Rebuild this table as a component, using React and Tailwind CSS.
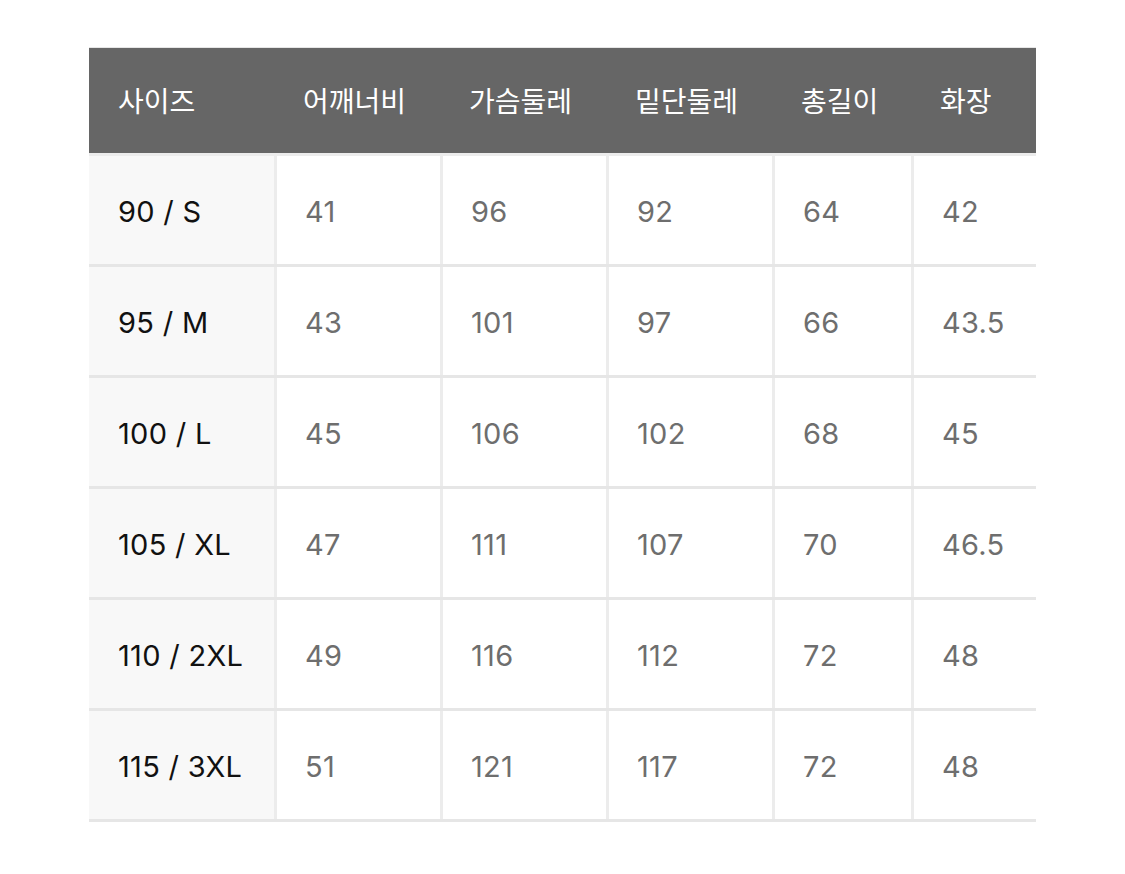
import React from "react";

const headers = ["사이즈", "어깨너비", "가슴둘레", "밑단둘레", "총길이", "화장"];

const rows = [
  ["90 / S", "41", "96", "92", "64", "42"],
  ["95 / M", "43", "101", "97", "66", "43.5"],
  ["100 / L", "45", "106", "102", "68", "45"],
  ["105 / XL", "47", "111", "107", "70", "46.5"],
  ["110 / 2XL", "49", "116", "112", "72", "48"],
  ["115 / 3XL", "51", "121", "117", "72", "48"],
];

const widths = ["w-[185px]", "w-[166px]", "w-[166px]", "w-[166px]", "w-[139px]", "w-[125px]"];

const App = () => {
  return (
    <div
      className="min-h-screen bg-white pt-[47px] pl-[89px]"
      style={{ fontFamily: '"Inter", "Noto Sans CJK KR", sans-serif' }}
    >
      <div className="w-[947px] border-t border-[#e6e6e6]">
        {/* Header */}
        <div className="flex h-[103px] items-center pt-[2px] bg-[#666666] border-b-[3px] border-[#ececec] box-content">
          {headers.map((h, i) => (
            <div key={i} className={`${widths[i]} shrink-0 pl-[29px] text-[28px] text-white`}>
              {h}
            </div>
          ))}
        </div>

        {/* Body */}
        {rows.map((row, r) => (
          <div key={r} className="flex h-[108px] border-b-[3px] border-[#e6e6e6] box-content">
            {row.map((cell, i) => (
              <div
                key={i}
                className={`${widths[i]} shrink-0 flex items-center pt-[3px] tracking-[0.3px] ${
                  i === 0
                    ? "bg-[#f8f8f8] pl-[29px] text-[#111111]"
                    : "border-l-[3px] border-[#ececec] pl-[28px] text-[#6e6e6e]"
                } text-[29px]`}
              >
                {cell}
              </div>
            ))}
          </div>
        ))}
      </div>
    </div>
  );
};

export default App;
